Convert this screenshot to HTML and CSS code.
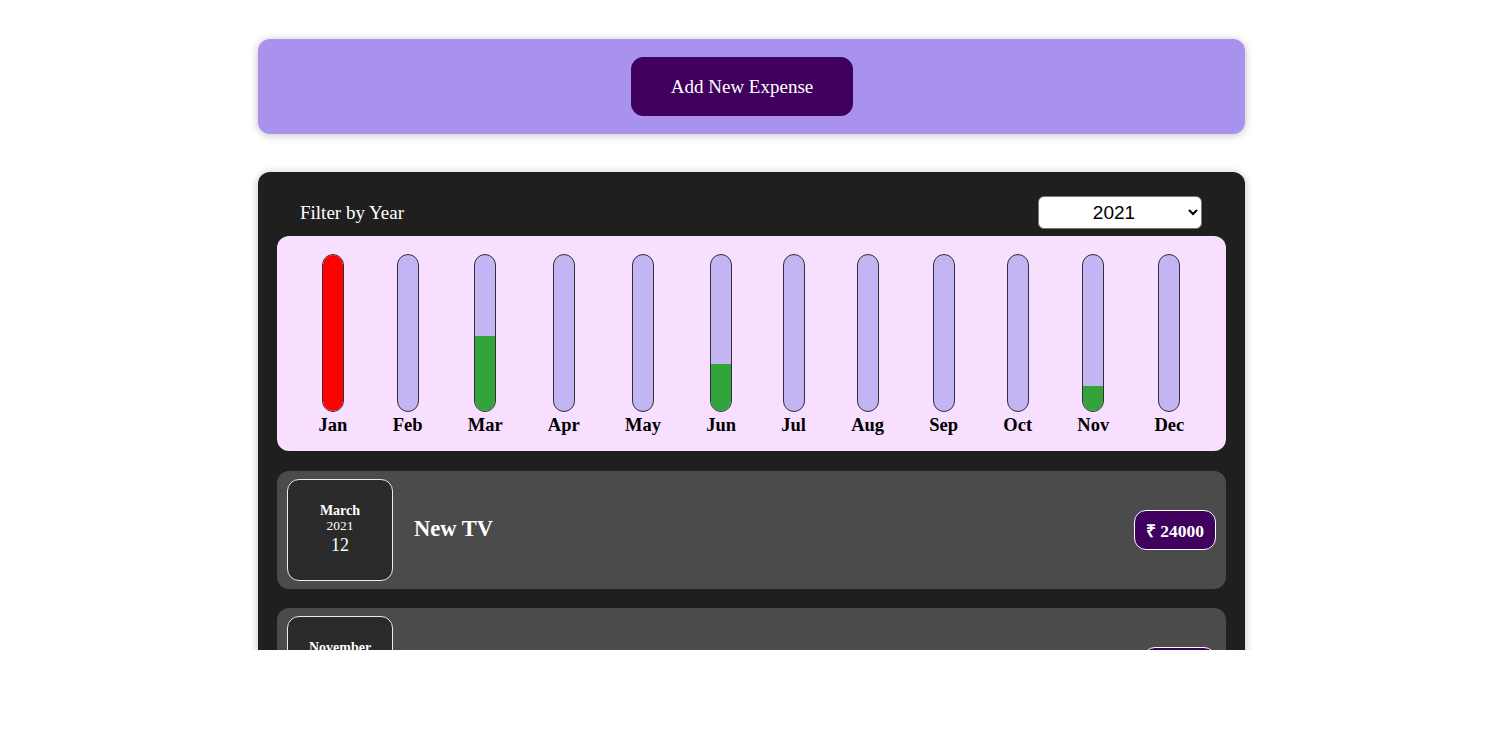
FILE: index.html
```html
<!DOCTYPE html>
<html lang="en">
<head>
<meta charset="utf-8">
<title>Expense Tracker</title>
<link rel="stylesheet" href="styles.css">
</head>
<body>
<div class="viewport">
  <div class="new-expense">
    <button class="add-btn" type="button">Add New Expense</button>
  </div>

  <div class="expenses">
    <div class="filter">
      <label class="filter-label">Filter by Year</label>
      <select class="filter-select">
        <option>2022</option>
        <option selected>2021</option>
        <option>2020</option>
        <option>2019</option>
      </select>
    </div>

    <div class="chart">
      <div class="chart-bar"><div class="bar-inner"><div class="bar-fill fill-max" style="height:100%"></div></div><div class="bar-label">Jan</div></div>
      <div class="chart-bar"><div class="bar-inner"><div class="bar-fill" style="height:0%"></div></div><div class="bar-label">Feb</div></div>
      <div class="chart-bar"><div class="bar-inner"><div class="bar-fill" style="height:48%"></div></div><div class="bar-label">Mar</div></div>
      <div class="chart-bar"><div class="bar-inner"><div class="bar-fill" style="height:0%"></div></div><div class="bar-label">Apr</div></div>
      <div class="chart-bar"><div class="bar-inner"><div class="bar-fill" style="height:0%"></div></div><div class="bar-label">May</div></div>
      <div class="chart-bar"><div class="bar-inner"><div class="bar-fill" style="height:30%"></div></div><div class="bar-label">Jun</div></div>
      <div class="chart-bar"><div class="bar-inner"><div class="bar-fill" style="height:0%"></div></div><div class="bar-label">Jul</div></div>
      <div class="chart-bar"><div class="bar-inner"><div class="bar-fill" style="height:0%"></div></div><div class="bar-label">Aug</div></div>
      <div class="chart-bar"><div class="bar-inner"><div class="bar-fill" style="height:0%"></div></div><div class="bar-label">Sep</div></div>
      <div class="chart-bar"><div class="bar-inner"><div class="bar-fill" style="height:0%"></div></div><div class="bar-label">Oct</div></div>
      <div class="chart-bar"><div class="bar-inner"><div class="bar-fill" style="height:16%"></div></div><div class="bar-label">Nov</div></div>
      <div class="chart-bar"><div class="bar-inner"><div class="bar-fill" style="height:0%"></div></div><div class="bar-label">Dec</div></div>
    </div>

    <ul class="expense-list">
      <li class="expense-item">
        <div class="expense-date">
          <div class="date-month">March</div>
          <div class="date-year">2021</div>
          <div class="date-day">12</div>
        </div>
        <div class="expense-desc">
          <h2 class="expense-title">New TV</h2>
          <div class="expense-price">₹ 24000</div>
        </div>
      </li>
      <li class="expense-item">
        <div class="expense-date">
          <div class="date-month">November</div>
          <div class="date-year">2021</div>
          <div class="date-day">28</div>
        </div>
        <div class="expense-desc">
          <h2 class="expense-title">Car Insurance</h2>
          <div class="expense-price">₹ 8000</div>
        </div>
      </li>
      <li class="expense-item">
        <div class="expense-date">
          <div class="date-month">June</div>
          <div class="date-year">2021</div>
          <div class="date-day">12</div>
        </div>
        <div class="expense-desc">
          <h2 class="expense-title">New Desk</h2>
          <div class="expense-price">₹ 15000</div>
        </div>
      </li>
    </ul>
  </div>
</div>
</body>
</html>
```

FILE: styles.css
```css
* {
  box-sizing: border-box;
}

html, body {
  margin: 0;
  padding: 0;
  background: #ffffff;
}

body {
  font-family: "Liberation Serif", "Times New Roman", serif;
}

.viewport {
  height: 650px;
  overflow: hidden;
  padding-top: 39px;
  padding-left: 4px;
}

.new-expense {
  width: 987px;
  margin: 0 auto;
  height: 95px;
  padding-top: 18px;
  background: #a892ee;
  border-radius: 12px;
  text-align: center;
  box-shadow: 0 1px 8px rgba(0, 0, 0, 0.25);
}

.add-btn {
  font-family: "Liberation Serif", "Times New Roman", serif;
  font-size: 19px;
  color: #ffffff;
  background: #40005d;
  border: 1px solid #40005d;
  border-radius: 12px;
  width: 222px;
  height: 59px;
  padding: 0;
  margin-right: 19px;
  cursor: pointer;
}

.expenses {
  width: 987px;
  margin: 38px auto 0;
  padding: 19px 19px 19px;
  background: #1f1f1f;
  border-radius: 12px;
  box-shadow: 0 1px 8px rgba(0, 0, 0, 0.25);
}

.filter {
  display: flex;
  align-items: center;
  justify-content: space-between;
  padding: 5px 24px 7px 23px;
}

.filter-label {
  color: #ffffff;
  font-size: 19px;
}

.filter-select {
  width: 164px;
  height: 33px;
  font-family: "Liberation Sans", Arial, sans-serif;
  font-size: 19px;
  text-align: center;
  text-align-last: center;
  border-radius: 6px;
  border: 1px solid #767676;
  background: #ffffff;
  color: #000000;
}

.chart {
  display: flex;
  justify-content: space-around;
  height: 215px;
  padding: 18px 19px 15px;
  background: #f8dfff;
  border-radius: 12px;
}

.chart-bar {
  display: flex;
  flex-direction: column;
  align-items: center;
  height: 100%;
}

.bar-inner {
  flex: none;
  width: 22px;
  height: 158px;
  border: 1px solid #313131;
  border-radius: 12px;
  background: #c3b4f3;
  overflow: hidden;
  display: flex;
  flex-direction: column;
  justify-content: flex-end;
}

.bar-fill {
  width: 100%;
  background: #33a43b;
}

.bar-fill.fill-max {
  background: #ff0000;
}

.bar-label {
  padding-top: 2px;
  font-size: 18.5px;
  font-weight: bold;
  line-height: 22px;
  color: #000000;
}

.expense-list {
  list-style: none;
  margin: 20px 0 0;
  padding: 0;
  display: flex;
  flex-direction: column;
  gap: 19px;
}

.expense-item {
  display: flex;
  align-items: center;
  padding: 8px 10px;
  background: #4b4b4b;
  border-radius: 12px;
  height: 118px;
}

.expense-date {
  width: 106px;
  height: 102px;
  flex: none;
  display: flex;
  flex-direction: column;
  align-items: center;
  justify-content: center;
  background: #2a2a2a;
  border: 1px solid #ececec;
  border-radius: 12px;
  color: #ffffff;
}

.date-month {
  font-size: 14px;
  font-weight: bold;
  line-height: 16px;
}

.date-year {
  font-size: 13.5px;
  line-height: 14px;
}

.date-day {
  font-size: 18px;
  line-height: 24px;
}

.expense-desc {
  flex: 1;
  display: flex;
  align-items: center;
  justify-content: space-between;
  margin-left: 21px;
}

.expense-title {
  margin: 0 0 2px;
  font-size: 22.5px;
  font-weight: bold;
  color: #ffffff;
}

.expense-price {
  height: 40px;
  padding: 0 11px;
  display: flex;
  align-items: center;
  font-size: 17.5px;
  font-weight: bold;
  color: #ffffff;
  background: #40005d;
  border: 1px solid #ffffff;
  border-radius: 12px;
}
```
